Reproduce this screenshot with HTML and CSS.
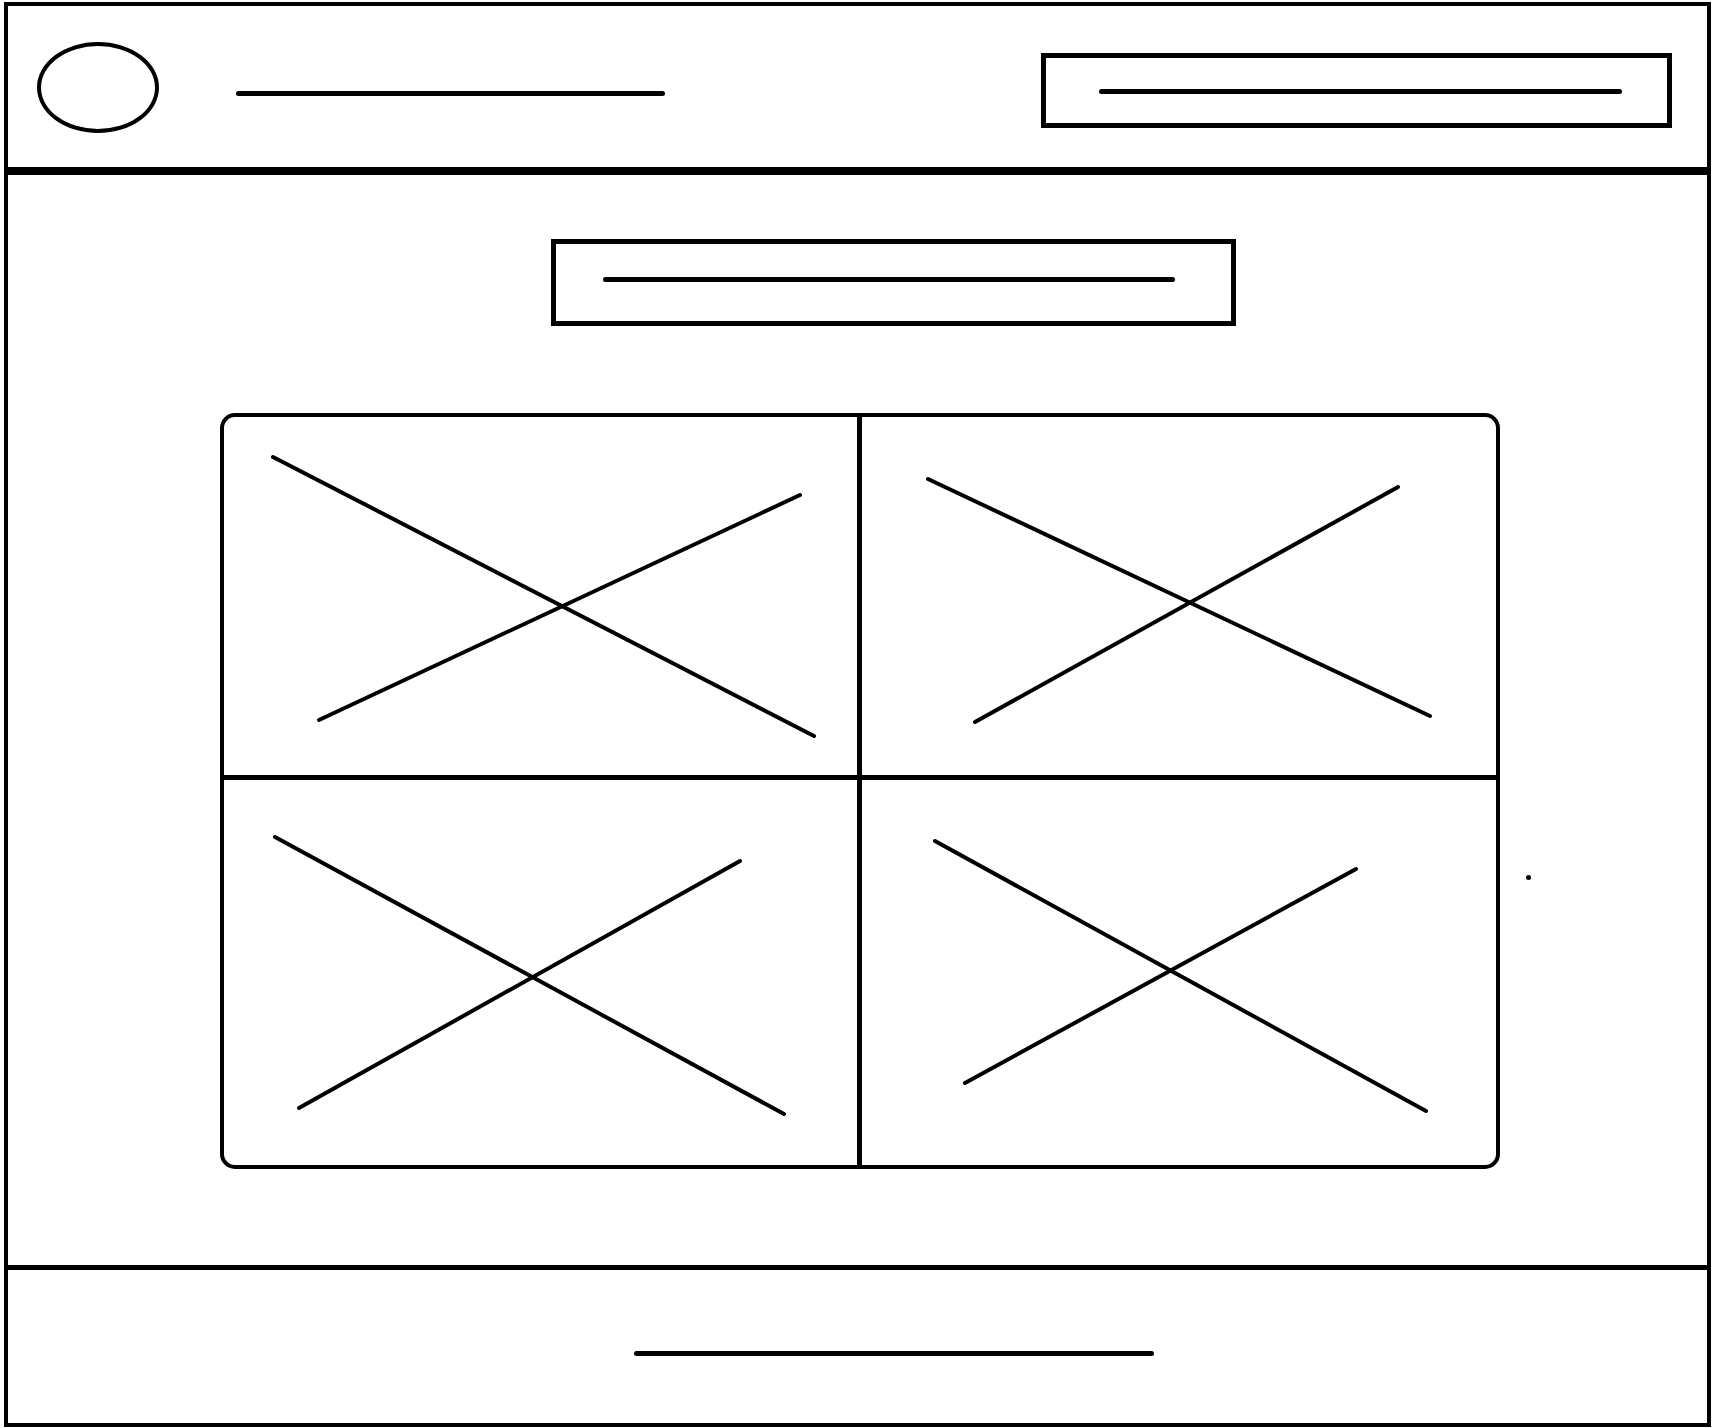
FILE: index.html
```html
<!DOCTYPE html>
<html>
<head>
  <title>Wireframe</title>
  <link rel="stylesheet" href="styles.css">
</head>
<body>
  <div class="frame">
    <header class="topbar">
      <div class="logo"></div>
      <div class="stroke site-name"></div>
      <div class="search">
        <div class="stroke search-text"></div>
      </div>
    </header>

    <main class="content">
      <div class="title-box">
        <div class="stroke title-text"></div>
      </div>

      <div class="gallery">
        <div class="cell">
          <svg viewBox="0 0 633 358">
            <line x1="49" y1="40" x2="590" y2="319" />
            <line x1="95" y1="303" x2="576" y2="78" />
          </svg>
        </div>
        <div class="cell">
          <svg viewBox="0 0 634 358">
            <line x1="66" y1="62" x2="568" y2="299" />
            <line x1="113" y1="305" x2="536" y2="70" />
          </svg>
        </div>
        <div class="cell">
          <svg viewBox="0 0 633 385">
            <line x1="51" y1="57" x2="560" y2="334" />
            <line x1="75" y1="328" x2="516" y2="81" />
          </svg>
        </div>
        <div class="cell">
          <svg viewBox="0 0 634 385">
            <line x1="73" y1="61" x2="564" y2="331" />
            <line x1="103" y1="303" x2="494" y2="89" />
          </svg>
        </div>
      </div>

      <span class="dot"></span>
    </main>

    <footer class="bottombar">
      <div class="stroke footer-text"></div>
    </footer>
  </div>
</body>
</html>
```

FILE: styles.css
```css
body {
  margin: 2px 0 0 4px;
  background-color: #fff;
  font-family: "Liberation Sans", Arial, sans-serif;
}

.frame {
  width: 1707px;
  height: 1425px;
  box-sizing: border-box;
  border: 4px solid #000;
  display: flex;
  flex-direction: column;
}

.stroke {
  height: 5px;
  background-color: #000;
  border-radius: 3px;
}

/* header */
.topbar {
  height: 169px;
  box-sizing: border-box;
  border-bottom: 8px solid #000;
  display: flex;
  align-items: flex-start;
  flex-shrink: 0;
}

.logo {
  width: 122px;
  height: 91px;
  box-sizing: border-box;
  border: 4px solid #000;
  border-radius: 50%;
  margin: 36px 0 0 29px;
}

.site-name {
  width: 429px;
  margin: 85px 0 0 77px;
}

.search {
  width: 631px;
  height: 75px;
  box-sizing: border-box;
  border: 5px solid #000;
  margin: 47px 35px 0 auto;
  padding: 31px 0 0 53px;
}

.search-text {
  width: 523px;
}

/* main */
.content {
  flex: 1;
  position: relative;
  padding-top: 64px;
}

.title-box {
  width: 685px;
  height: 87px;
  box-sizing: border-box;
  border: 5px solid #000;
  margin-left: 543px;
  padding: 33px 0 0 47px;
}

.title-text {
  width: 572px;
}

.gallery {
  width: 1280px;
  height: 756px;
  box-sizing: border-box;
  margin: 87px 0 0 212px;
  border: 4px solid #000;
  border-radius: 15px;
  overflow: hidden;
  display: grid;
  grid-template-columns: 633px 634px;
  grid-template-rows: 358px 385px;
  gap: 5px;
  background-color: #000;
}

.cell {
  background-color: #fff;
}

.cell svg {
  display: block;
  width: 100%;
  height: 100%;
}

.cell line {
  stroke: #000;
  stroke-width: 4;
  stroke-linecap: round;
}

.dot {
  position: absolute;
  left: 1518px;
  top: 700px;
  width: 5px;
  height: 5px;
  border-radius: 50%;
  background-color: #000;
}

/* footer */
.bottombar {
  height: 158px;
  box-sizing: border-box;
  border-top: 5px solid #000;
  padding: 81px 0 0 626px;
  flex-shrink: 0;
}

.footer-text {
  width: 520px;
}
```
